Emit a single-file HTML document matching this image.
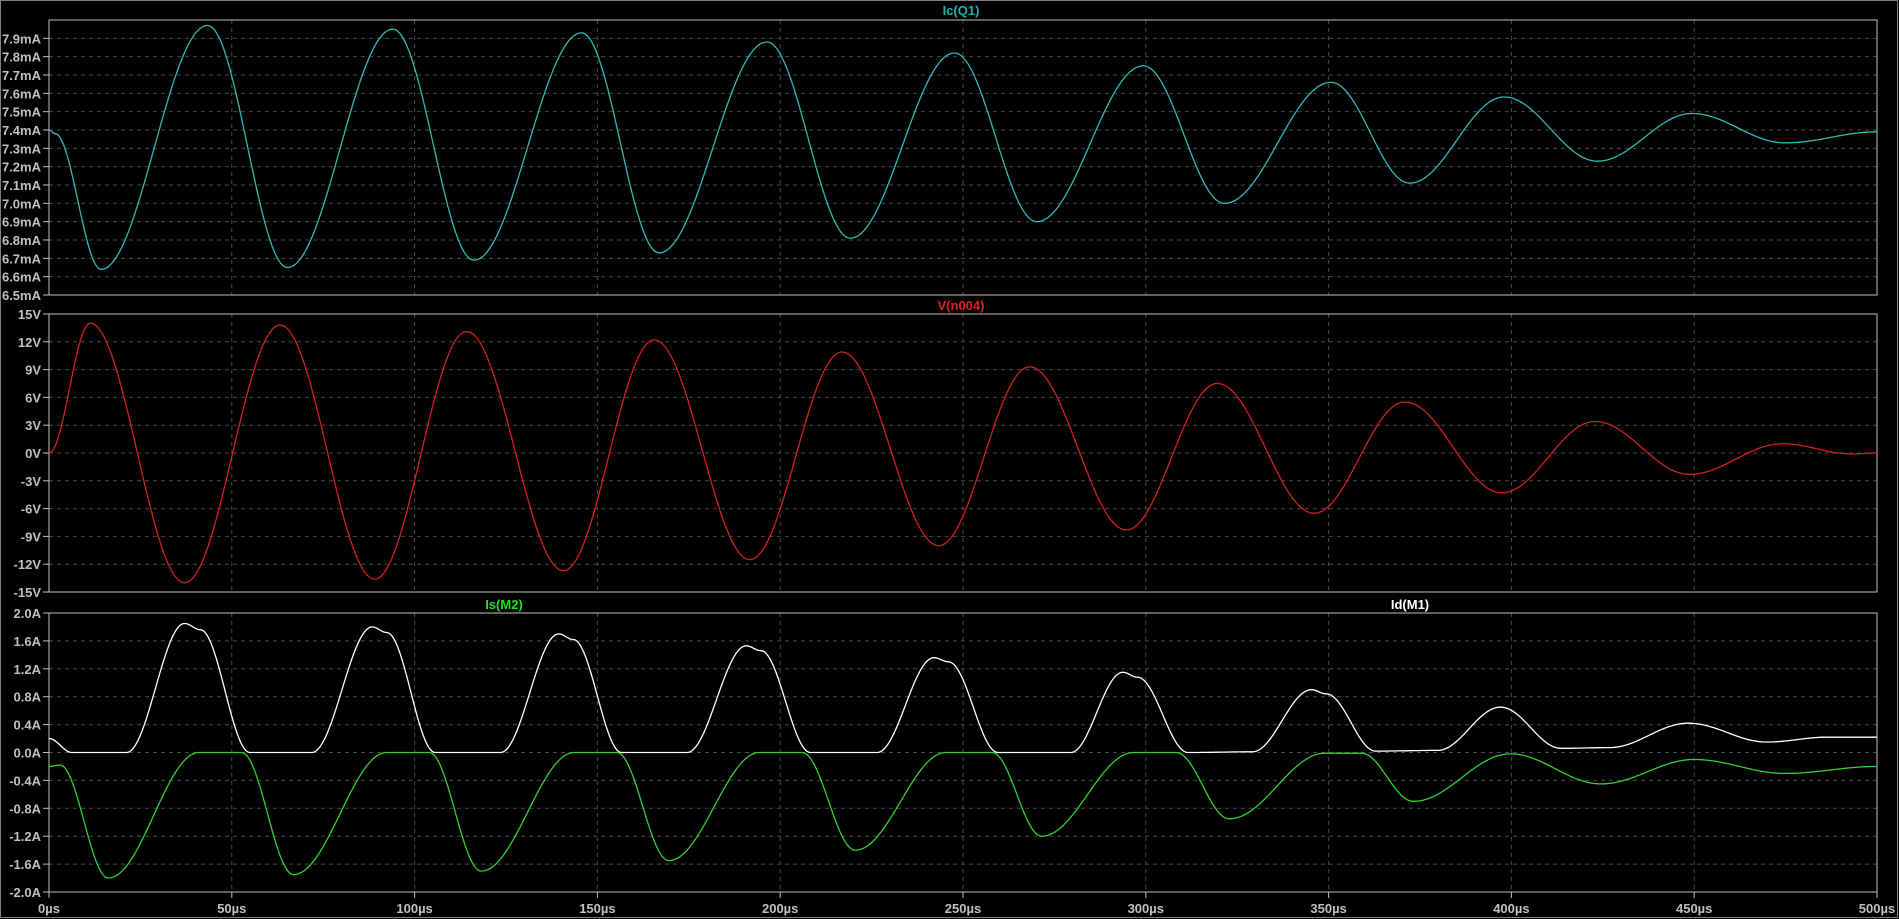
<!DOCTYPE html>
<html><head><meta charset="utf-8"><style>
html,body{margin:0;padding:0;background:#000;width:1899px;height:919px;overflow:hidden}
svg{display:block}
text{font-family:"Liberation Sans",sans-serif;font-weight:bold;font-size:13px}
</style></head><body>
<svg id="s" width="1899" height="919" xmlns="http://www.w3.org/2000/svg">
<rect x="0" y="0" width="1899" height="919" fill="#000"/>
<rect x="0.5" y="0.5" width="1897" height="917" fill="none" stroke="#808080" stroke-width="1"/>
</svg>
<script>
const s=document.getElementById('s');const NS='http://www.w3.org/2000/svg';
function el(t,a,txt){const e=document.createElementNS(NS,t);for(const k in a)e.setAttribute(k,a[k]);if(txt!==undefined)e.textContent=txt;s.appendChild(e);return e;}
const X0=49,X1=1877,W=X1-X0;
const panels=[
 {top:20,bot:295,min:6.5,max:8.0,n:15,skipTop:true,lab:i=>(6.5+i*0.1).toFixed(1)+'mA'},
 {top:314,bot:592,min:-15,max:15,n:10,lab:i=>{const v=-15+3*i;return v+'V';}},
 {top:613,bot:892,min:-2,max:2,n:10,lab:i=>(-2+0.4*i).toFixed(1)+'A'}];
panels.forEach((p,pi)=>{
 for(let i=0;i<=p.n;i++){const y=p.bot-(p.bot-p.top)*i/p.n;
  if(i>0&&i<p.n)el('line',{x1:X0,x2:X1,y1:y,y2:y,stroke:'#4a4a4a','stroke-dasharray':'4,4'});
  if(p.skipTop&&i==p.n)continue;
  el('line',{x1:X0-6,x2:X0,y1:y,y2:y,stroke:'#c0c0c0'});
  el('text',{x:X0-8,y:y+5,fill:'#c0c0c0','text-anchor':'end'},p.lab(i));}
 for(let j=1;j<10;j++){const x=X0+W*j/10;el('line',{x1:x,x2:x,y1:p.top,y2:p.bot,stroke:'#4a4a4a','stroke-dasharray':'4,4'});}
 el('rect',{x:X0,y:p.top,width:W,height:p.bot-p.top,fill:'none',stroke:'#c0c0c0'});
});
for(let j=0;j<=10;j++){const x=X0+W*j/10;el('line',{x1:x,x2:x,y1:892,y2:898,stroke:'#c0c0c0'});
 el('text',{x:x,y:913,fill:'#c0c0c0','text-anchor':'middle','font-size':'14'},(j*50)+'µs');}
el('text',{x:961,y:15,fill:'#20b0b0','text-anchor':'middle'},'Ic(Q1)');
el('text',{x:961,y:310,fill:'#e02020','text-anchor':'middle'},'V(n004)');
el('text',{x:504,y:609,fill:'#20e020','text-anchor':'middle'},'Is(M2)');
el('text',{x:1410,y:609,fill:'#ffffff','text-anchor':'middle'},'Id(M1)');
function curve(pts,p,color,glitches){
 const conv=pts.map(([x,v])=>[X0+(x-41)*W/1510,v]);
 let d='';
 const Y=v=>p.bot-(v-p.min)/(p.max-p.min)*(p.bot-p.top);
 for(let k=0;k<conv.length-1;k++){const [xa,va]=conv[k],[xb,vb]=conv[k+1];
  for(let x=Math.ceil(xa);x<=xb;x++){const t=(x-xa)/(xb-xa);const v=va+(vb-va)*(1-Math.cos(Math.PI*t))/2;
   d+=(d?'L':'M')+x+' '+Y(v).toFixed(1);}}
 el('path',{d:d,fill:'none',stroke:color,'stroke-width':'1.3'});
 if(glitches)glitches.forEach(([x,v1,v2])=>{const rx=X0+(x-41)*W/1510;el('line',{x1:rx,x2:rx,y1:Y(v1),y2:Y(v2),stroke:color,'stroke-width':'1.3'});});
}
curve([[41,7.40],[46,7.38],[84,6.64],[172,7.97],[238,6.65],[325,7.95],[392,6.69],[481,7.93],[545,6.73],[634,7.88],[703,6.81],[789,7.82],[857,6.90],[945,7.75],[1012,7.00],[1100,7.66],[1165,7.11],[1243,7.58],[1320,7.23],[1398,7.49],[1475,7.33],[1551,7.39]],panels[0],'#30b8b8');
curve([[41,0],[75,14.0],[153,-14.0],[232,13.8],[310,-13.6],[386,13.1],[466,-12.7],[541,12.2],[620,-11.5],[696,10.9],[776,-10.0],[851,9.3],[931,-8.3],[1006,7.5],[1086,-6.5],[1161,5.5],[1241,-4.3],[1318,3.4],[1396,-2.3],[1473,1.0],[1530,-0.1],[1551,0]],panels[1],'#d02020');
curve([[41,0.2],[60,0.0],[105,0.0],[153,1.85],[166,1.76],[207,0.0],[258,0.0],[308,1.80],[320,1.72],[360,0],[414,0],[462,1.70],[474,1.62],[514,0],[568,0],[617,1.53],[629,1.46],[670,0.0],[725,0],[772,1.36],[784,1.30],[825,0.0],[885,0.0],[928,1.15],[940,1.08],[982,0.0],[1035,0.01],[1084,0.9],[1096,0.84],[1137,0.02],[1188,0.03],[1240,0.65],[1290,0.06],[1330,0.07],[1395,0.42],[1460,0.15],[1510,0.22],[1551,0.22]],panels[2],'#ffffff');
curve([[41,-0.2],[50,-0.18],[90,-1.8],[165,0],[200,0],[243,-1.75],[320,0],[355,0],[398,-1.7],[475,0],[510,0],[553,-1.55],[628,0],[663,0],[707,-1.4],[782,0],[820,0],[861,-1.2],[937,0],[972,0],[1016,-0.95],[1095,-0.01],[1125,-0.01],[1168,-0.7],[1248,-0.02],[1323,-0.45],[1400,-0.1],[1475,-0.3],[1551,-0.2]],panels[2],'#30d030');
</script>
</body></html>
